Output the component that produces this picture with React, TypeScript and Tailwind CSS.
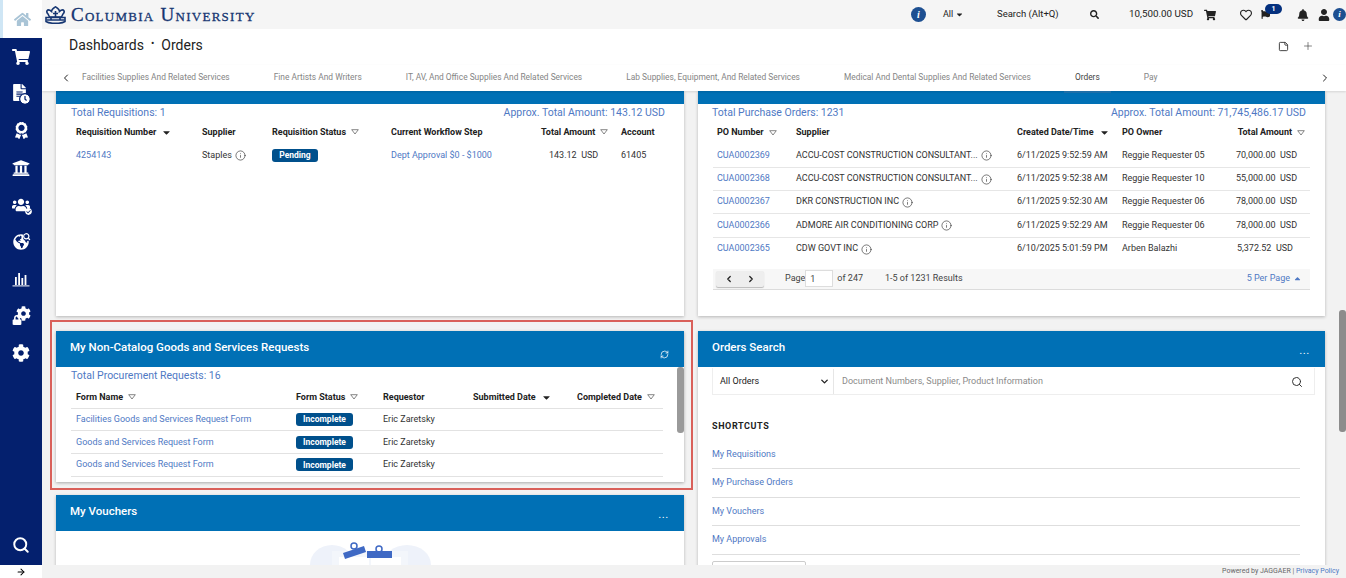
import { ReactNode } from 'react';
import {
  FaHome,
  FaShoppingCart,
  FaFileAlt,
  FaClock,
  FaAward,
  FaUniversity,
  FaUsers,
  FaCheckCircle,
  FaGlobeAmericas,
  FaSearch,
  FaCog,
  FaLock,
  FaBell,
  FaUser,
  FaRegHeart,
  FaFlag,
  FaCaretDown,
  FaCaretUp,
} from 'react-icons/fa';
import { ChevronLeft, ChevronRight, ChevronDown, Info, Plus, RefreshCw, Search, ArrowRight, StickyNote } from 'lucide-react';

const tabs = [
  'Facilities Supplies And Related Services',
  'Fine Artists And Writers',
  'IT, AV, And Office Supplies And Related Services',
  'Lab Supplies, Equipment, And Related Services',
  'Medical And Dental Supplies And Related Services',
];

const orders = [
  ['CUA0002369', 'ACCU-COST CONSTRUCTION CONSULTANT...', '6/11/2025 9:52:59 AM', 'Reggie Requester 05', '70,000.00'],
  ['CUA0002368', 'ACCU-COST CONSTRUCTION CONSULTANT...', '6/11/2025 9:52:38 AM', 'Reggie Requester 10', '55,000.00'],
  ['CUA0002367', 'DKR CONSTRUCTION INC', '6/11/2025 9:52:30 AM', 'Reggie Requester 06', '78,000.00'],
  ['CUA0002366', 'ADMORE AIR CONDITIONING CORP', '6/11/2025 9:52:29 AM', 'Reggie Requester 06', '78,000.00'],
  ['CUA0002365', 'CDW GOVT INC', '6/10/2025 5:01:59 PM', 'Arben Balazhi', '5,372.52'],
];

const requests = [
  'Facilities Goods and Services Request Form',
  'Goods and Services Request Form',
  'Goods and Services Request Form',
];

const shortcuts = ['My Requisitions', 'My Purchase Orders', 'My Vouchers', 'My Approvals'];

function SortOpen() {
  return (
    <svg width="8" height="6" viewBox="0 0 8 6" className="ml-[5px] shrink-0">
      <path d="M0.7 0.7H7.3L4 5Z" fill="none" stroke="#666" strokeWidth="0.8" />
    </svg>
  );
}

function SortSolid() {
  return <FaCaretDown className="ml-[5px] shrink-0 text-[#222]" size={11} />;
}

function InfoDot() {
  return <Info className="ml-[3px] shrink-0 text-[#222]" size={11} strokeWidth={1.3} />;
}

function Badge({ children, className }: { children: ReactNode; className: string }) {
  return (
    <span className={`flex h-[13px] items-center justify-center rounded-[3px] bg-[#00508c] text-[8.5px] font-bold text-white ${className}`}>
      {children}
    </span>
  );
}

function NavIcon({ children }: { children: ReactNode }) {
  return <div className="relative flex h-[37px] items-center justify-center text-white">{children}</div>;
}

function Sidebar() {
  return (
    <aside className="flex w-[42px] shrink-0 flex-col bg-[#04206e]">
      <div className="flex h-[38px] items-center justify-center border-l-[3px] border-[#cfe6f5] bg-white text-[#a9c4d6]">
        <FaHome size={17} />
      </div>
      <NavIcon><FaShoppingCart size={18} /></NavIcon>
      <NavIcon>
        <FaFileAlt size={17} className="-ml-[3px] -mt-[2px]" />
        <FaClock size={10} className="absolute left-[20px] top-[19px] rounded-full bg-[#04206e] outline outline-1 outline-[#04206e]" />
      </NavIcon>
      <NavIcon><FaAward size={17} /></NavIcon>
      <NavIcon><FaUniversity size={18} /></NavIcon>
      <NavIcon>
        <FaUsers size={18} />
        <FaCheckCircle size={7} className="absolute left-[25px] top-[22px]" />
      </NavIcon>
      <NavIcon>
        <FaGlobeAmericas size={16} />
        <FaSearch size={8} className="absolute left-[23px] top-[10px] rounded-full bg-[#04206e]" />
      </NavIcon>
      <NavIcon>
        <svg width="18" height="16" viewBox="0 0 18 16" fill="#fff">
          <rect x="3" y="6" width="1.8" height="8" />
          <rect x="6.2" y="2" width="1.8" height="12" />
          <rect x="9.4" y="7" width="1.8" height="7" />
          <rect x="12.6" y="4" width="1.8" height="10" />
          <rect x="0.5" y="14.4" width="17" height="1" />
        </svg>
      </NavIcon>
      <NavIcon>
        <FaCog size={15} className="ml-[5px] -mt-[5px]" />
        <FaLock size={10} className="absolute left-[12px] top-[18px]" />
      </NavIcon>
      <NavIcon><FaCog size={18} /></NavIcon>
      <div className="flex flex-1 items-end justify-center pb-[11px] text-white">
        <Search size={18} strokeWidth={2.6} />
      </div>
      <div className="flex h-[13px] items-center justify-center bg-white text-black">
        <ArrowRight size={10} strokeWidth={2.5} />
      </div>
    </aside>
  );
}

function CrownLogo() {
  return (
    <svg width="21" height="18" viewBox="0 0 21 18" fill="none" stroke="#163672" strokeWidth="1.6">
      <path d="M3 8C0.5 5.5 2.5 3 4.8 4.2L6.5 5.5C6.3 3.5 8.5 2.2 10.5 0.8C12.5 2.2 14.7 3.5 14.5 5.5L16.2 4.2C18.5 3 20.5 5.5 18 8L16.5 11H4.5Z" />
      <path d="M1 11.5H20V15.5C16 18 5 18 1 15.5Z" />
      <path d="M1.5 14H19.5M6 11.5V14M10.5 5V11M8 7.5H13M15 11.5V14" />
    </svg>
  );
}

function TopBar() {
  return (
    <header className="flex h-[29px] shrink-0 items-center bg-[#f5f5f5] pl-[3px] text-[#222]">
      <CrownLogo />
      <span className="ml-[5px] text-[19px] leading-none tracking-[1.27px] text-[#163672] [-webkit-text-stroke:0.3px_#163672] [font-family:'Liberation_Serif',serif] [font-variant:small-caps]">
        Columbia University
      </span>
      <span className="ml-auto flex h-[15px] w-[15px] items-center justify-center rounded-full bg-[#1d4f91] text-[10px] font-bold italic text-white [font-family:'Liberation_Serif',serif]">
        i
      </span>
      <span className="ml-[17px] flex w-[30px] items-center text-[9px]">
        All <FaCaretDown size={9} className="ml-[2px]" />
      </span>
      <span className="ml-[24px] w-[90px] text-[9.5px]">Search (Alt+Q)</span>
      <FaSearch size={9} className="ml-[3px]" />
      <span className="ml-[30px] w-[64px] whitespace-nowrap text-[9.8px]">10,500.00 USD</span>
      <FaShoppingCart size={12} className="ml-[11px]" />
      <FaRegHeart size={12} className="ml-[24px]" />
      <span className="relative ml-[9px] w-[20px]">
        <FaFlag size={9} />
        <span className="absolute -top-[6px] left-[4px] flex h-[10px] w-[17px] items-center justify-center rounded-full bg-[#04307e] text-[7px] font-bold text-white">
          1
        </span>
      </span>
      <FaBell size={12} className="ml-[16px]" />
      <FaUser size={12} className="ml-[9px]" />
      <span className="ml-[3px] flex h-[13px] w-[13px] items-center justify-center rounded-full bg-[#1d4f91] text-[9px] font-bold italic text-white [font-family:'Liberation_Serif',serif]">
        i
      </span>
    </header>
  );
}

function TitleBar() {
  return (
    <div className="flex h-[36px] shrink-0 items-center bg-white pb-[4px] pl-[27px] pr-[32px] text-[14px] text-[#222]">
      <span>Dashboards</span>
      <span className="mx-[7px] -mt-[4px] text-[10px]">•</span>
      <span>Orders</span>
      <StickyNote size={11} className="ml-auto mt-[2px] text-[#333]" />
      <Plus size={12} strokeWidth={1.2} className="ml-[13px] mt-[2px] text-[#333]" />
    </div>
  );
}

function TabBar() {
  return (
    <nav className="relative z-10 flex h-[26px] shrink-0 items-center bg-white pb-[1px] pl-[18px] text-[8.4px] text-[#858585] shadow-[0_1px_2px_rgba(0,0,0,0.12)]">
      <ChevronLeft size={12} className="text-[#222]" strokeWidth={2} />
      <div className="ml-[10px] flex items-center gap-[44px]">
        {tabs.map((t) => (
          <span key={t} className="whitespace-nowrap">{t}</span>
        ))}
        <span className="relative text-[#444]">
          Orders
          <span className="absolute -bottom-[9px] -left-[11px] -right-[11px] h-[2px] bg-[#1f6fa8]" />
        </span>
        <span>Pay</span>
      </div>
      <ChevronRight size={12} className="absolute right-[15px] text-[#222]" strokeWidth={2} />
    </nav>
  );
}

function CardHeader({ title, icon }: { title: string; icon: ReactNode }) {
  return (
    <div className="flex h-[36px] shrink-0 items-center justify-between bg-[#0070b5] pb-[2px] pl-[14px] pr-[15px] text-[11.5px] font-medium text-white">
      <span>{title}</span>
      <span className="mt-[12px] flex">{icon}</span>
    </div>
  );
}

function Th({ children, sort }: { children: ReactNode; sort?: ReactNode }) {
  return (
    <div className="flex items-center whitespace-nowrap font-bold text-[#222]">
      {children}
      {sort}
    </div>
  );
}

function RequisitionsCard() {
  return (
    <section className="flex h-[225px] shrink-0 flex-col bg-white shadow-[0_1px_3px_rgba(0,0,0,0.25)]">
      <div className="h-[13px] bg-[#0070b5]" />
      <div className="mt-[1px] flex items-center justify-between pl-[15px] pr-[19px] text-[10.5px] text-[#4f79c4]">
        <span>Total Requisitions: 1</span>
        <span>Approx. Total Amount: 143.12 USD</span>
      </div>
      <div className="grid grid-cols-[126px_70px_119px_150px_80px_1fr] pl-[20px] text-[9px] leading-[23px]">
        <Th sort={<SortSolid />}>Requisition Number</Th>
        <Th>Supplier</Th>
        <Th sort={<SortOpen />}>Requisition Status</Th>
        <Th>Current Workflow Step</Th>
        <Th sort={<SortOpen />}>Total Amount</Th>
        <Th>Account</Th>
        <div className="text-[#4f79c4]">4254143</div>
        <div className="flex items-center text-[#333]">Staples<InfoDot /></div>
        <div className="flex items-center"><Badge className="w-[46px]">Pending</Badge></div>
        <div className="text-[#4f79c4]">Dept Approval $0 - $1000</div>
        <div className="pl-[8px] text-[#333]">143.12&nbsp; USD</div>
        <div className="text-[#333]">61405</div>
      </div>
    </section>
  );
}

function PurchaseOrdersCard() {
  return (
    <section className="flex h-[225px] shrink-0 flex-col bg-white shadow-[0_1px_3px_rgba(0,0,0,0.25)]">
      <div className="h-[13px] bg-[#0070b5]" />
      <div className="mt-[1px] flex items-center justify-between pl-[14px] pr-[19px] text-[10.5px] text-[#4f79c4]">
        <span>Total Purchase Orders: 1231</span>
        <span>Approx. Total Amount: 71,745,486.17 USD</span>
      </div>
      <div className="mx-[15px] text-[9px]">
        <div className="grid h-[24px] grid-cols-[79px_221px_105px_114px_1fr] items-center pl-[4px]">
          <Th sort={<SortOpen />}>PO Number</Th>
          <Th>Supplier</Th>
          <Th sort={<SortSolid />}>Created Date/Time</Th>
          <Th>PO Owner</Th>
          <div className="flex justify-end pr-[5px]"><Th sort={<SortOpen />}>Total Amount</Th></div>
        </div>
        {orders.map((o, i) => (
          <div
            key={o[0]}
            className={`grid h-[23.2px] grid-cols-[79px_221px_105px_114px_1fr] items-center pl-[4px] text-[#333] ${i < 4 ? 'border-b border-[#e6e6e6]' : ''}`}
          >
            <span className="text-[#4f79c4]">{o[0]}</span>
            <span className="flex items-center whitespace-nowrap">{o[1]}<InfoDot /></span>
            <span className="whitespace-nowrap">{o[2]}</span>
            <span className="whitespace-nowrap">{o[3]}</span>
            <span className="pr-[17px] text-right whitespace-nowrap">{o[4]}&nbsp; USD</span>
          </div>
        ))}
        <div className="mt-[8px] flex h-[21px] items-center border-b border-[#dcdcdc] bg-[#f7f7f7] pl-[3px] pr-[8px] text-[#444]">
          <span className="flex h-[16px] w-[48px] items-center justify-around rounded-[2px] bg-[#eeeeee] px-[2px] text-[#222] shadow-[0_1px_1px_rgba(0,0,0,0.25)]">
            <ChevronLeft size={10} strokeWidth={3} />
            <ChevronRight size={10} strokeWidth={3} />
          </span>
          <span className="ml-[21px]">Page</span>
          <span className="h-[17px] w-[28px] border border-[#ddd] bg-white pl-[4px] leading-[16px]">1</span>
          <span className="ml-[4px]">of 247</span>
          <span className="ml-[22px]">1-5 of 1231 Results</span>
          <span className="ml-auto flex items-center text-[#4f79c4]">
            5 Per Page <FaCaretUp size={9} className="ml-[3px]" />
          </span>
        </div>
      </div>
    </section>
  );
}

function RequestsCard() {
  return (
    <section className="relative flex h-[151px] shrink-0 flex-col bg-white shadow-[0_1px_3px_rgba(0,0,0,0.3)]">
      <CardHeader title="My Non-Catalog Goods and Services Requests" icon={<RefreshCw size={9} />} />
      <div className="mt-[1px] pl-[15px] text-[10.5px] text-[#4f79c4]">Total Procurement Requests: 16</div>
      <div className="ml-[15px] mr-[21px] mt-[3px] text-[9px]">
        <div className="grid h-[22px] grid-cols-[220px_87px_90px_104px_1fr] items-center border-b border-[#e2e2e2] pl-[5px]">
          <Th sort={<SortOpen />}>Form Name</Th>
          <Th sort={<SortOpen />}>Form Status</Th>
          <Th>Requestor</Th>
          <Th sort={<SortSolid />}>Submitted Date</Th>
          <Th sort={<SortOpen />}>Completed Date</Th>
        </div>
        {requests.map((r, i) => (
          <div key={i} className="grid h-[22.7px] grid-cols-[220px_87px_90px_104px_1fr] items-center border-b border-[#e2e2e2] pl-[5px] text-[#333]">
            <span className="whitespace-nowrap text-[#4f79c4]">{r}</span>
            <Badge className="w-[57px]">Incomplete</Badge>
            <span>Eric Zaretsky</span>
          </div>
        ))}
      </div>
      <span className="absolute right-0 top-[36px] h-[66px] w-[7px] rounded-[3px] bg-[#9a9a9a]" />
    </section>
  );
}

function VouchersCard() {
  return (
    <section className="flex flex-1 flex-col bg-white shadow-[0_1px_3px_rgba(0,0,0,0.25)]">
      <CardHeader title="My Vouchers" icon={<span className="-mt-[4px] text-[9px] tracking-[1px]">...</span>} />
      <div className="flex flex-1 items-start justify-center overflow-hidden pt-[8px]">
        <svg width="126" height="40" viewBox="0 0 126 40">
          <ellipse cx="25" cy="26" rx="22" ry="20" fill="#eef2fa" />
          <ellipse cx="100" cy="26" rx="24" ry="20" fill="#eef2fa" />
          <rect x="25" y="12" width="76" height="30" fill="#f3f6fb" />
          <rect x="32" y="18" width="30" height="22" fill="#fff" />
          <rect x="64" y="18" width="30" height="22" fill="#fff" />
          <path d="M36 14L57 7L59 13L38 20Z" fill="#3f69c4" />
          <circle cx="47" cy="7" r="3" fill="none" stroke="#3f69c4" strokeWidth="1.5" />
          <rect x="60" y="12" width="25" height="7" fill="#3f69c4" />
          <circle cx="72" cy="10" r="3" fill="none" stroke="#3f69c4" strokeWidth="1.5" />
        </svg>
      </div>
    </section>
  );
}

function OrdersSearchCard() {
  return (
    <section className="flex flex-1 flex-col overflow-hidden bg-white shadow-[0_1px_3px_rgba(0,0,0,0.25)]">
      <CardHeader title="Orders Search" icon={<span className="-mt-[4px] text-[9px] tracking-[1px]">...</span>} />
      <div className="ml-[14px] mr-[10px] mt-[1px] flex h-[27px] shrink-0 items-center border-x border-b border-[#eeeeee] pt-[1px] text-[9px]">
        <div className="flex h-full w-[121px] items-center justify-between border-r border-[#e6e6e6] pl-[7px] pr-[3px] text-[#222]">
          All Orders
          <ChevronDown size={11} strokeWidth={3} />
        </div>
        <span className="ml-[8px] text-[#8a8a8a]">Document Numbers, Supplier, Product Information</span>
        <Search size={12} className="ml-auto mr-[11px] text-[#333]" />
      </div>
      <div className="ml-[14px] mr-[25px] mt-[25px]">
        <div className="text-[9px] font-bold tracking-[0.6px] text-[#222]">SHORTCUTS</div>
        <div className="mt-[7px]">
          {shortcuts.map((s) => (
            <div key={s} className="flex h-[28.5px] items-center border-b border-[#dedede] text-[9px] text-[#4f79c4]">
              {s}
            </div>
          ))}
        </div>
        <div className="mt-[6px] h-[20px] w-[94px] rounded-[2px] border border-[#cccccc]" />
      </div>
    </section>
  );
}

export default function App() {
  return (
    <div className="relative flex h-[578px] w-[1346px] overflow-hidden bg-[#f2f2f2] [font-family:Roboto,sans-serif]">
      <Sidebar />
      <main className="flex min-w-0 flex-1 flex-col">
        <TopBar />
        <TitleBar />
        <TabBar />
        <div className="grid h-[474px] shrink-0 grid-cols-[628px_627px] gap-x-[14px] overflow-hidden pl-[14px]">
          <div className="flex flex-col">
            <RequisitionsCard />
            <div className="h-[15px] shrink-0" />
            <RequestsCard />
            <div className="h-[13px] shrink-0" />
            <VouchersCard />
          </div>
          <div className="flex flex-col">
            <PurchaseOrdersCard />
            <div className="h-[15px] shrink-0" />
            <OrdersSearchCard />
          </div>
        </div>
        <footer className="flex h-[13px] items-center justify-end pr-[7px] text-[7px] text-[#666]">
          Powered by JAGGAER |&nbsp;<span className="text-[#4f79c4]">Privacy Policy</span>
        </footer>
      </main>
      {/* annotation and page scrollbar sit over the content */}
      <div className="absolute left-[50px] top-[320px] h-[170px] w-[643px] border-2 border-[#d9605a]" />
      <div className="absolute right-0 top-[310px] h-[122px] w-[7px] rounded-[3px] bg-[#8c8c8c]" />
    </div>
  );
}
